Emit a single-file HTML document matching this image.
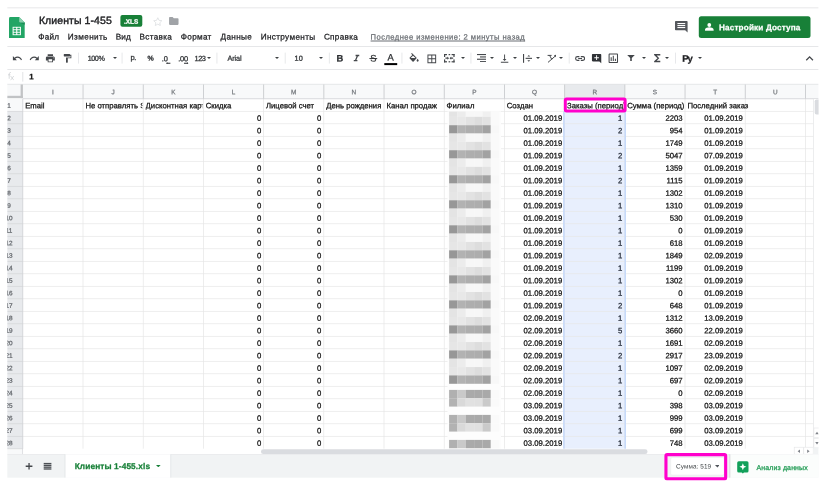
<!DOCTYPE html>
<html lang="ru"><head><meta charset="utf-8"><title>Клиенты 1-455</title>
<style>
html,body{margin:0;padding:0;background:#fff}
#r{filter:blur(0.4px);position:relative;width:829px;height:493px;overflow:hidden;background:#fff;font-family:"Liberation Sans",sans-serif}
#r div,#r span,#r svg{position:absolute;display:block}
#r span{-webkit-text-stroke:0.25px;left:0;top:0;white-space:nowrap;transform-origin:0 0;text-rendering:geometricPrecision}
#t{left:0;top:0;width:829px;height:493px;will-change:transform}
</style></head>
<body><div id="r">
<svg style="left:0;top:0" width="829" height="493" viewBox="0 0 829 493">
<rect x="7.20" y="7.40" width="811.40" height="0.90" fill="#e4e5e7"/>
<rect x="7.20" y="46.00" width="811.40" height="0.90" fill="#e4e5e7"/>
<rect x="7.20" y="69.10" width="811.40" height="0.90" fill="#e4e5e7"/>
<rect x="120.40" y="15.10" width="21.90" height="11.70" fill="#188038" rx="2"/>
<rect x="698.80" y="16.30" width="111.70" height="21.80" fill="#188038" rx="2.5"/>
<rect x="78.10" y="52.60" width="0.70" height="11.00" fill="#dddfe2"/>
<rect x="121.70" y="52.60" width="0.70" height="11.00" fill="#dddfe2"/>
<rect x="216.60" y="52.60" width="0.70" height="11.00" fill="#dddfe2"/>
<rect x="284.80" y="52.60" width="0.70" height="11.00" fill="#dddfe2"/>
<rect x="328.90" y="52.60" width="0.70" height="11.00" fill="#dddfe2"/>
<rect x="369.40" y="58.00" width="7.80" height="0.90" fill="#2b2e31"/>
<rect x="384.30" y="63.10" width="12.90" height="2.00" fill="#000"/>
<rect x="401.60" y="52.60" width="0.70" height="11.00" fill="#dddfe2"/>
<rect x="470.60" y="52.60" width="0.70" height="11.00" fill="#dddfe2"/>
<rect x="568.80" y="52.60" width="0.70" height="11.00" fill="#dddfe2"/>
<rect x="675.00" y="52.60" width="0.70" height="11.00" fill="#dddfe2"/>
<rect x="22.50" y="72.00" width="0.70" height="9.60" fill="#d5d7da"/>
<rect x="7.20" y="84.20" width="811.40" height="14.60" fill="#f8f9fa"/>
<rect x="7.20" y="98.80" width="15.60" height="355.50" fill="#f8f9fa"/>
<rect x="564.60" y="84.20" width="60.20" height="14.60" fill="#e8eaed"/>
<rect x="7.20" y="111.30" width="15.60" height="337.50" fill="#e8eaed"/>
<rect x="563.40" y="111.30" width="62.40" height="337.50" fill="#e8effd"/>
<rect x="22.80" y="110.95" width="790.70" height="0.70" fill="#e6e6e6"/>
<rect x="7.20" y="110.95" width="15.60" height="0.70" fill="#d3d5d8"/>
<rect x="22.80" y="123.45" width="790.70" height="0.70" fill="#e6e6e6"/>
<rect x="7.20" y="123.45" width="15.60" height="0.70" fill="#d3d5d8"/>
<rect x="22.80" y="135.95" width="790.70" height="0.70" fill="#e6e6e6"/>
<rect x="7.20" y="135.95" width="15.60" height="0.70" fill="#d3d5d8"/>
<rect x="22.80" y="148.45" width="790.70" height="0.70" fill="#e6e6e6"/>
<rect x="7.20" y="148.45" width="15.60" height="0.70" fill="#d3d5d8"/>
<rect x="22.80" y="160.95" width="790.70" height="0.70" fill="#e6e6e6"/>
<rect x="7.20" y="160.95" width="15.60" height="0.70" fill="#d3d5d8"/>
<rect x="22.80" y="173.45" width="790.70" height="0.70" fill="#e6e6e6"/>
<rect x="7.20" y="173.45" width="15.60" height="0.70" fill="#d3d5d8"/>
<rect x="22.80" y="185.95" width="790.70" height="0.70" fill="#e6e6e6"/>
<rect x="7.20" y="185.95" width="15.60" height="0.70" fill="#d3d5d8"/>
<rect x="22.80" y="198.45" width="790.70" height="0.70" fill="#e6e6e6"/>
<rect x="7.20" y="198.45" width="15.60" height="0.70" fill="#d3d5d8"/>
<rect x="22.80" y="210.95" width="790.70" height="0.70" fill="#e6e6e6"/>
<rect x="7.20" y="210.95" width="15.60" height="0.70" fill="#d3d5d8"/>
<rect x="22.80" y="223.45" width="790.70" height="0.70" fill="#e6e6e6"/>
<rect x="7.20" y="223.45" width="15.60" height="0.70" fill="#d3d5d8"/>
<rect x="22.80" y="235.95" width="790.70" height="0.70" fill="#e6e6e6"/>
<rect x="7.20" y="235.95" width="15.60" height="0.70" fill="#d3d5d8"/>
<rect x="22.80" y="248.45" width="790.70" height="0.70" fill="#e6e6e6"/>
<rect x="7.20" y="248.45" width="15.60" height="0.70" fill="#d3d5d8"/>
<rect x="22.80" y="260.95" width="790.70" height="0.70" fill="#e6e6e6"/>
<rect x="7.20" y="260.95" width="15.60" height="0.70" fill="#d3d5d8"/>
<rect x="22.80" y="273.45" width="790.70" height="0.70" fill="#e6e6e6"/>
<rect x="7.20" y="273.45" width="15.60" height="0.70" fill="#d3d5d8"/>
<rect x="22.80" y="285.95" width="790.70" height="0.70" fill="#e6e6e6"/>
<rect x="7.20" y="285.95" width="15.60" height="0.70" fill="#d3d5d8"/>
<rect x="22.80" y="298.45" width="790.70" height="0.70" fill="#e6e6e6"/>
<rect x="7.20" y="298.45" width="15.60" height="0.70" fill="#d3d5d8"/>
<rect x="22.80" y="310.95" width="790.70" height="0.70" fill="#e6e6e6"/>
<rect x="7.20" y="310.95" width="15.60" height="0.70" fill="#d3d5d8"/>
<rect x="22.80" y="323.45" width="790.70" height="0.70" fill="#e6e6e6"/>
<rect x="7.20" y="323.45" width="15.60" height="0.70" fill="#d3d5d8"/>
<rect x="22.80" y="335.95" width="790.70" height="0.70" fill="#e6e6e6"/>
<rect x="7.20" y="335.95" width="15.60" height="0.70" fill="#d3d5d8"/>
<rect x="22.80" y="348.45" width="790.70" height="0.70" fill="#e6e6e6"/>
<rect x="7.20" y="348.45" width="15.60" height="0.70" fill="#d3d5d8"/>
<rect x="22.80" y="360.95" width="790.70" height="0.70" fill="#e6e6e6"/>
<rect x="7.20" y="360.95" width="15.60" height="0.70" fill="#d3d5d8"/>
<rect x="22.80" y="373.45" width="790.70" height="0.70" fill="#e6e6e6"/>
<rect x="7.20" y="373.45" width="15.60" height="0.70" fill="#d3d5d8"/>
<rect x="22.80" y="385.95" width="790.70" height="0.70" fill="#e6e6e6"/>
<rect x="7.20" y="385.95" width="15.60" height="0.70" fill="#d3d5d8"/>
<rect x="22.80" y="398.45" width="790.70" height="0.70" fill="#e6e6e6"/>
<rect x="7.20" y="398.45" width="15.60" height="0.70" fill="#d3d5d8"/>
<rect x="22.80" y="410.95" width="790.70" height="0.70" fill="#e6e6e6"/>
<rect x="7.20" y="410.95" width="15.60" height="0.70" fill="#d3d5d8"/>
<rect x="22.80" y="423.45" width="790.70" height="0.70" fill="#e6e6e6"/>
<rect x="7.20" y="423.45" width="15.60" height="0.70" fill="#d3d5d8"/>
<rect x="22.80" y="435.95" width="790.70" height="0.70" fill="#e6e6e6"/>
<rect x="7.20" y="435.95" width="15.60" height="0.70" fill="#d3d5d8"/>
<rect x="7.20" y="448.45" width="15.60" height="0.70" fill="#d3d5d8"/>
<rect x="82.65" y="98.80" width="0.70" height="350.00" fill="#e6e6e6"/>
<rect x="82.60" y="84.20" width="0.90" height="14.60" fill="#c9cbce"/>
<rect x="142.85" y="98.80" width="0.70" height="350.00" fill="#e6e6e6"/>
<rect x="142.80" y="84.20" width="0.90" height="14.60" fill="#c9cbce"/>
<rect x="203.05" y="98.80" width="0.70" height="350.00" fill="#e6e6e6"/>
<rect x="203.00" y="84.20" width="0.90" height="14.60" fill="#c9cbce"/>
<rect x="263.25" y="98.80" width="0.70" height="350.00" fill="#e6e6e6"/>
<rect x="263.20" y="84.20" width="0.90" height="14.60" fill="#c9cbce"/>
<rect x="323.45" y="98.80" width="0.70" height="350.00" fill="#e6e6e6"/>
<rect x="323.40" y="84.20" width="0.90" height="14.60" fill="#c9cbce"/>
<rect x="383.65" y="98.80" width="0.70" height="350.00" fill="#e6e6e6"/>
<rect x="383.60" y="84.20" width="0.90" height="14.60" fill="#c9cbce"/>
<rect x="443.85" y="98.80" width="0.70" height="350.00" fill="#e6e6e6"/>
<rect x="443.80" y="84.20" width="0.90" height="14.60" fill="#c9cbce"/>
<rect x="504.05" y="98.80" width="0.70" height="350.00" fill="#e6e6e6"/>
<rect x="504.00" y="84.20" width="0.90" height="14.60" fill="#c9cbce"/>
<rect x="564.25" y="98.80" width="0.70" height="350.00" fill="#e6e6e6"/>
<rect x="564.20" y="84.20" width="0.90" height="14.60" fill="#c9cbce"/>
<rect x="624.45" y="98.80" width="0.70" height="350.00" fill="#e6e6e6"/>
<rect x="624.40" y="84.20" width="0.90" height="14.60" fill="#c9cbce"/>
<rect x="684.65" y="98.80" width="0.70" height="350.00" fill="#e6e6e6"/>
<rect x="684.60" y="84.20" width="0.90" height="14.60" fill="#c9cbce"/>
<rect x="744.85" y="98.80" width="0.70" height="350.00" fill="#e6e6e6"/>
<rect x="744.80" y="84.20" width="0.90" height="14.60" fill="#c9cbce"/>
<rect x="805.05" y="98.80" width="0.70" height="350.00" fill="#e6e6e6"/>
<rect x="805.00" y="84.20" width="0.90" height="14.60" fill="#c9cbce"/>
<rect x="865.25" y="98.80" width="0.70" height="350.00" fill="#e6e6e6"/>
<rect x="865.20" y="84.20" width="0.90" height="14.60" fill="#c9cbce"/>
<rect x="563.20" y="111.30" width="1.40" height="337.50" fill="#c3d7fa"/>
<rect x="624.50" y="111.30" width="1.40" height="337.50" fill="#c3d7fa"/>
<rect x="7.20" y="83.85" width="811.40" height="0.70" fill="#dcdee0"/>
<rect x="22.80" y="98.40" width="795.80" height="0.80" fill="#cfd1d4"/>
<rect x="22.40" y="98.80" width="0.80" height="355.50" fill="#cfd1d4"/>
<rect x="20.60" y="84.50" width="2.30" height="13.60" fill="#c1c3c5"/>
<rect x="7.20" y="95.80" width="15.70" height="2.30" fill="#c1c3c5"/>
<rect x="813.50" y="99.20" width="5.10" height="355.50" fill="#fff"/>
<rect x="813.20" y="98.80" width="0.60" height="350.00" fill="#e0e1e3"/>
<rect x="814.70" y="99.50" width="6.00" height="15.10" fill="#dadce0" rx="1.8"/>
<rect x="447.50" y="111.30" width="53.50" height="337.50" fill="#fdfdfd"/>
<rect x="449.10" y="111.60" width="8.39" height="5.31" fill="#e4e4e4"/>
<rect x="457.44" y="111.60" width="8.39" height="5.31" fill="#ececec"/>
<rect x="465.78" y="111.60" width="8.39" height="5.31" fill="#f7f7f7"/>
<rect x="474.12" y="111.60" width="8.39" height="5.31" fill="#f7f7f7"/>
<rect x="482.46" y="111.60" width="8.39" height="5.31" fill="#f0f0f0"/>
<rect x="490.80" y="111.60" width="8.39" height="5.31" fill="#fafafa"/>
<rect x="449.10" y="116.86" width="8.39" height="8.39" fill="#e6e6e6"/>
<rect x="457.44" y="116.86" width="8.39" height="8.39" fill="#e8e8e8"/>
<rect x="465.78" y="116.86" width="8.39" height="8.39" fill="#e2e2e2"/>
<rect x="474.12" y="116.86" width="8.39" height="8.39" fill="#dddddd"/>
<rect x="482.46" y="116.86" width="8.39" height="8.39" fill="#e2e2e2"/>
<rect x="490.80" y="116.86" width="8.39" height="8.39" fill="#fafafa"/>
<rect x="449.10" y="125.20" width="8.39" height="8.39" fill="#979797"/>
<rect x="457.44" y="125.20" width="8.39" height="8.39" fill="#b2b2b2"/>
<rect x="465.78" y="125.20" width="8.39" height="8.39" fill="#aeaeae"/>
<rect x="474.12" y="125.20" width="8.39" height="8.39" fill="#adadad"/>
<rect x="482.46" y="125.20" width="8.39" height="8.39" fill="#a2a2a2"/>
<rect x="490.80" y="125.20" width="8.39" height="8.39" fill="#f8f8f8"/>
<rect x="449.10" y="133.54" width="8.39" height="8.39" fill="#e4e4e4"/>
<rect x="457.44" y="133.54" width="8.39" height="8.39" fill="#ececec"/>
<rect x="465.78" y="133.54" width="8.39" height="8.39" fill="#f7f7f7"/>
<rect x="474.12" y="133.54" width="8.39" height="8.39" fill="#f7f7f7"/>
<rect x="482.46" y="133.54" width="8.39" height="8.39" fill="#f0f0f0"/>
<rect x="490.80" y="133.54" width="8.39" height="8.39" fill="#fafafa"/>
<rect x="449.10" y="141.88" width="8.39" height="8.39" fill="#e6e6e6"/>
<rect x="457.44" y="141.88" width="8.39" height="8.39" fill="#e8e8e8"/>
<rect x="465.78" y="141.88" width="8.39" height="8.39" fill="#e2e2e2"/>
<rect x="474.12" y="141.88" width="8.39" height="8.39" fill="#dddddd"/>
<rect x="482.46" y="141.88" width="8.39" height="8.39" fill="#e2e2e2"/>
<rect x="490.80" y="141.88" width="8.39" height="8.39" fill="#fafafa"/>
<rect x="449.10" y="150.22" width="8.39" height="8.39" fill="#979797"/>
<rect x="457.44" y="150.22" width="8.39" height="8.39" fill="#b2b2b2"/>
<rect x="465.78" y="150.22" width="8.39" height="8.39" fill="#aeaeae"/>
<rect x="474.12" y="150.22" width="8.39" height="8.39" fill="#adadad"/>
<rect x="482.46" y="150.22" width="8.39" height="8.39" fill="#a2a2a2"/>
<rect x="490.80" y="150.22" width="8.39" height="8.39" fill="#f8f8f8"/>
<rect x="449.10" y="158.56" width="8.39" height="8.39" fill="#e4e4e4"/>
<rect x="457.44" y="158.56" width="8.39" height="8.39" fill="#ececec"/>
<rect x="465.78" y="158.56" width="8.39" height="8.39" fill="#f7f7f7"/>
<rect x="474.12" y="158.56" width="8.39" height="8.39" fill="#f7f7f7"/>
<rect x="482.46" y="158.56" width="8.39" height="8.39" fill="#f0f0f0"/>
<rect x="490.80" y="158.56" width="8.39" height="8.39" fill="#fafafa"/>
<rect x="449.10" y="166.90" width="8.39" height="8.39" fill="#e6e6e6"/>
<rect x="457.44" y="166.90" width="8.39" height="8.39" fill="#e8e8e8"/>
<rect x="465.78" y="166.90" width="8.39" height="8.39" fill="#e2e2e2"/>
<rect x="474.12" y="166.90" width="8.39" height="8.39" fill="#dddddd"/>
<rect x="482.46" y="166.90" width="8.39" height="8.39" fill="#e2e2e2"/>
<rect x="490.80" y="166.90" width="8.39" height="8.39" fill="#fafafa"/>
<rect x="449.10" y="175.24" width="8.39" height="8.39" fill="#979797"/>
<rect x="457.44" y="175.24" width="8.39" height="8.39" fill="#b2b2b2"/>
<rect x="465.78" y="175.24" width="8.39" height="8.39" fill="#aeaeae"/>
<rect x="474.12" y="175.24" width="8.39" height="8.39" fill="#adadad"/>
<rect x="482.46" y="175.24" width="8.39" height="8.39" fill="#a2a2a2"/>
<rect x="490.80" y="175.24" width="8.39" height="8.39" fill="#f8f8f8"/>
<rect x="449.10" y="183.58" width="8.39" height="8.39" fill="#e4e4e4"/>
<rect x="457.44" y="183.58" width="8.39" height="8.39" fill="#ececec"/>
<rect x="465.78" y="183.58" width="8.39" height="8.39" fill="#f7f7f7"/>
<rect x="474.12" y="183.58" width="8.39" height="8.39" fill="#f7f7f7"/>
<rect x="482.46" y="183.58" width="8.39" height="8.39" fill="#f0f0f0"/>
<rect x="490.80" y="183.58" width="8.39" height="8.39" fill="#fafafa"/>
<rect x="449.10" y="191.92" width="8.39" height="8.39" fill="#e6e6e6"/>
<rect x="457.44" y="191.92" width="8.39" height="8.39" fill="#e8e8e8"/>
<rect x="465.78" y="191.92" width="8.39" height="8.39" fill="#e2e2e2"/>
<rect x="474.12" y="191.92" width="8.39" height="8.39" fill="#dddddd"/>
<rect x="482.46" y="191.92" width="8.39" height="8.39" fill="#e2e2e2"/>
<rect x="490.80" y="191.92" width="8.39" height="8.39" fill="#fafafa"/>
<rect x="449.10" y="200.26" width="8.39" height="8.39" fill="#979797"/>
<rect x="457.44" y="200.26" width="8.39" height="8.39" fill="#b2b2b2"/>
<rect x="465.78" y="200.26" width="8.39" height="8.39" fill="#aeaeae"/>
<rect x="474.12" y="200.26" width="8.39" height="8.39" fill="#adadad"/>
<rect x="482.46" y="200.26" width="8.39" height="8.39" fill="#a2a2a2"/>
<rect x="490.80" y="200.26" width="8.39" height="8.39" fill="#f8f8f8"/>
<rect x="449.10" y="208.60" width="8.39" height="8.39" fill="#e4e4e4"/>
<rect x="457.44" y="208.60" width="8.39" height="8.39" fill="#ececec"/>
<rect x="465.78" y="208.60" width="8.39" height="8.39" fill="#f7f7f7"/>
<rect x="474.12" y="208.60" width="8.39" height="8.39" fill="#f7f7f7"/>
<rect x="482.46" y="208.60" width="8.39" height="8.39" fill="#f0f0f0"/>
<rect x="490.80" y="208.60" width="8.39" height="8.39" fill="#fafafa"/>
<rect x="449.10" y="216.94" width="8.39" height="8.39" fill="#e6e6e6"/>
<rect x="457.44" y="216.94" width="8.39" height="8.39" fill="#e8e8e8"/>
<rect x="465.78" y="216.94" width="8.39" height="8.39" fill="#e2e2e2"/>
<rect x="474.12" y="216.94" width="8.39" height="8.39" fill="#dddddd"/>
<rect x="482.46" y="216.94" width="8.39" height="8.39" fill="#e2e2e2"/>
<rect x="490.80" y="216.94" width="8.39" height="8.39" fill="#fafafa"/>
<rect x="449.10" y="225.28" width="8.39" height="8.39" fill="#979797"/>
<rect x="457.44" y="225.28" width="8.39" height="8.39" fill="#b2b2b2"/>
<rect x="465.78" y="225.28" width="8.39" height="8.39" fill="#aeaeae"/>
<rect x="474.12" y="225.28" width="8.39" height="8.39" fill="#adadad"/>
<rect x="482.46" y="225.28" width="8.39" height="8.39" fill="#a2a2a2"/>
<rect x="490.80" y="225.28" width="8.39" height="8.39" fill="#f8f8f8"/>
<rect x="449.10" y="233.62" width="8.39" height="8.39" fill="#e4e4e4"/>
<rect x="457.44" y="233.62" width="8.39" height="8.39" fill="#ececec"/>
<rect x="465.78" y="233.62" width="8.39" height="8.39" fill="#f7f7f7"/>
<rect x="474.12" y="233.62" width="8.39" height="8.39" fill="#f7f7f7"/>
<rect x="482.46" y="233.62" width="8.39" height="8.39" fill="#f0f0f0"/>
<rect x="490.80" y="233.62" width="8.39" height="8.39" fill="#fafafa"/>
<rect x="449.10" y="241.96" width="8.39" height="8.39" fill="#e6e6e6"/>
<rect x="457.44" y="241.96" width="8.39" height="8.39" fill="#e8e8e8"/>
<rect x="465.78" y="241.96" width="8.39" height="8.39" fill="#e2e2e2"/>
<rect x="474.12" y="241.96" width="8.39" height="8.39" fill="#dddddd"/>
<rect x="482.46" y="241.96" width="8.39" height="8.39" fill="#e2e2e2"/>
<rect x="490.80" y="241.96" width="8.39" height="8.39" fill="#fafafa"/>
<rect x="449.10" y="250.30" width="8.39" height="8.39" fill="#979797"/>
<rect x="457.44" y="250.30" width="8.39" height="8.39" fill="#b2b2b2"/>
<rect x="465.78" y="250.30" width="8.39" height="8.39" fill="#aeaeae"/>
<rect x="474.12" y="250.30" width="8.39" height="8.39" fill="#adadad"/>
<rect x="482.46" y="250.30" width="8.39" height="8.39" fill="#a2a2a2"/>
<rect x="490.80" y="250.30" width="8.39" height="8.39" fill="#f8f8f8"/>
<rect x="449.10" y="258.64" width="8.39" height="8.39" fill="#e4e4e4"/>
<rect x="457.44" y="258.64" width="8.39" height="8.39" fill="#ececec"/>
<rect x="465.78" y="258.64" width="8.39" height="8.39" fill="#f7f7f7"/>
<rect x="474.12" y="258.64" width="8.39" height="8.39" fill="#f7f7f7"/>
<rect x="482.46" y="258.64" width="8.39" height="8.39" fill="#f0f0f0"/>
<rect x="490.80" y="258.64" width="8.39" height="8.39" fill="#fafafa"/>
<rect x="449.10" y="266.98" width="8.39" height="8.39" fill="#e6e6e6"/>
<rect x="457.44" y="266.98" width="8.39" height="8.39" fill="#e8e8e8"/>
<rect x="465.78" y="266.98" width="8.39" height="8.39" fill="#e2e2e2"/>
<rect x="474.12" y="266.98" width="8.39" height="8.39" fill="#dddddd"/>
<rect x="482.46" y="266.98" width="8.39" height="8.39" fill="#e2e2e2"/>
<rect x="490.80" y="266.98" width="8.39" height="8.39" fill="#fafafa"/>
<rect x="449.10" y="275.32" width="8.39" height="8.39" fill="#979797"/>
<rect x="457.44" y="275.32" width="8.39" height="8.39" fill="#b2b2b2"/>
<rect x="465.78" y="275.32" width="8.39" height="8.39" fill="#aeaeae"/>
<rect x="474.12" y="275.32" width="8.39" height="8.39" fill="#adadad"/>
<rect x="482.46" y="275.32" width="8.39" height="8.39" fill="#a2a2a2"/>
<rect x="490.80" y="275.32" width="8.39" height="8.39" fill="#f8f8f8"/>
<rect x="449.10" y="283.66" width="8.39" height="8.39" fill="#e4e4e4"/>
<rect x="457.44" y="283.66" width="8.39" height="8.39" fill="#ececec"/>
<rect x="465.78" y="283.66" width="8.39" height="8.39" fill="#f7f7f7"/>
<rect x="474.12" y="283.66" width="8.39" height="8.39" fill="#f7f7f7"/>
<rect x="482.46" y="283.66" width="8.39" height="8.39" fill="#f0f0f0"/>
<rect x="490.80" y="283.66" width="8.39" height="8.39" fill="#fafafa"/>
<rect x="449.10" y="292.00" width="8.39" height="8.39" fill="#e6e6e6"/>
<rect x="457.44" y="292.00" width="8.39" height="8.39" fill="#e8e8e8"/>
<rect x="465.78" y="292.00" width="8.39" height="8.39" fill="#e2e2e2"/>
<rect x="474.12" y="292.00" width="8.39" height="8.39" fill="#dddddd"/>
<rect x="482.46" y="292.00" width="8.39" height="8.39" fill="#e2e2e2"/>
<rect x="490.80" y="292.00" width="8.39" height="8.39" fill="#fafafa"/>
<rect x="449.10" y="300.34" width="8.39" height="8.39" fill="#979797"/>
<rect x="457.44" y="300.34" width="8.39" height="8.39" fill="#b2b2b2"/>
<rect x="465.78" y="300.34" width="8.39" height="8.39" fill="#aeaeae"/>
<rect x="474.12" y="300.34" width="8.39" height="8.39" fill="#adadad"/>
<rect x="482.46" y="300.34" width="8.39" height="8.39" fill="#a2a2a2"/>
<rect x="490.80" y="300.34" width="8.39" height="8.39" fill="#f8f8f8"/>
<rect x="449.10" y="308.68" width="8.39" height="8.39" fill="#e4e4e4"/>
<rect x="457.44" y="308.68" width="8.39" height="8.39" fill="#ececec"/>
<rect x="465.78" y="308.68" width="8.39" height="8.39" fill="#f7f7f7"/>
<rect x="474.12" y="308.68" width="8.39" height="8.39" fill="#f7f7f7"/>
<rect x="482.46" y="308.68" width="8.39" height="8.39" fill="#f0f0f0"/>
<rect x="490.80" y="308.68" width="8.39" height="8.39" fill="#fafafa"/>
<rect x="449.10" y="317.02" width="8.39" height="8.39" fill="#e6e6e6"/>
<rect x="457.44" y="317.02" width="8.39" height="8.39" fill="#e8e8e8"/>
<rect x="465.78" y="317.02" width="8.39" height="8.39" fill="#e2e2e2"/>
<rect x="474.12" y="317.02" width="8.39" height="8.39" fill="#dddddd"/>
<rect x="482.46" y="317.02" width="8.39" height="8.39" fill="#e2e2e2"/>
<rect x="490.80" y="317.02" width="8.39" height="8.39" fill="#fafafa"/>
<rect x="449.10" y="325.36" width="8.39" height="8.39" fill="#979797"/>
<rect x="457.44" y="325.36" width="8.39" height="8.39" fill="#b2b2b2"/>
<rect x="465.78" y="325.36" width="8.39" height="8.39" fill="#aeaeae"/>
<rect x="474.12" y="325.36" width="8.39" height="8.39" fill="#adadad"/>
<rect x="482.46" y="325.36" width="8.39" height="8.39" fill="#a2a2a2"/>
<rect x="490.80" y="325.36" width="8.39" height="8.39" fill="#f8f8f8"/>
<rect x="449.10" y="333.70" width="8.39" height="8.39" fill="#e4e4e4"/>
<rect x="457.44" y="333.70" width="8.39" height="8.39" fill="#ececec"/>
<rect x="465.78" y="333.70" width="8.39" height="8.39" fill="#f7f7f7"/>
<rect x="474.12" y="333.70" width="8.39" height="8.39" fill="#f7f7f7"/>
<rect x="482.46" y="333.70" width="8.39" height="8.39" fill="#f0f0f0"/>
<rect x="490.80" y="333.70" width="8.39" height="8.39" fill="#fafafa"/>
<rect x="449.10" y="342.04" width="8.39" height="8.39" fill="#e6e6e6"/>
<rect x="457.44" y="342.04" width="8.39" height="8.39" fill="#e8e8e8"/>
<rect x="465.78" y="342.04" width="8.39" height="8.39" fill="#e2e2e2"/>
<rect x="474.12" y="342.04" width="8.39" height="8.39" fill="#dddddd"/>
<rect x="482.46" y="342.04" width="8.39" height="8.39" fill="#e2e2e2"/>
<rect x="490.80" y="342.04" width="8.39" height="8.39" fill="#fafafa"/>
<rect x="449.10" y="350.38" width="8.39" height="8.39" fill="#979797"/>
<rect x="457.44" y="350.38" width="8.39" height="8.39" fill="#b2b2b2"/>
<rect x="465.78" y="350.38" width="8.39" height="8.39" fill="#aeaeae"/>
<rect x="474.12" y="350.38" width="8.39" height="8.39" fill="#adadad"/>
<rect x="482.46" y="350.38" width="8.39" height="8.39" fill="#a2a2a2"/>
<rect x="490.80" y="350.38" width="8.39" height="8.39" fill="#f8f8f8"/>
<rect x="449.10" y="358.72" width="8.39" height="8.39" fill="#e4e4e4"/>
<rect x="457.44" y="358.72" width="8.39" height="8.39" fill="#ececec"/>
<rect x="465.78" y="358.72" width="8.39" height="8.39" fill="#f7f7f7"/>
<rect x="474.12" y="358.72" width="8.39" height="8.39" fill="#f7f7f7"/>
<rect x="482.46" y="358.72" width="8.39" height="8.39" fill="#f0f0f0"/>
<rect x="490.80" y="358.72" width="8.39" height="8.39" fill="#fafafa"/>
<rect x="449.10" y="367.06" width="8.39" height="8.39" fill="#e6e6e6"/>
<rect x="457.44" y="367.06" width="8.39" height="8.39" fill="#e8e8e8"/>
<rect x="465.78" y="367.06" width="8.39" height="8.39" fill="#e2e2e2"/>
<rect x="474.12" y="367.06" width="8.39" height="8.39" fill="#dddddd"/>
<rect x="482.46" y="367.06" width="8.39" height="8.39" fill="#e2e2e2"/>
<rect x="490.80" y="367.06" width="8.39" height="8.39" fill="#fafafa"/>
<rect x="449.10" y="375.40" width="8.39" height="8.39" fill="#979797"/>
<rect x="457.44" y="375.40" width="8.39" height="8.39" fill="#b2b2b2"/>
<rect x="465.78" y="375.40" width="8.39" height="8.39" fill="#aeaeae"/>
<rect x="474.12" y="375.40" width="8.39" height="8.39" fill="#adadad"/>
<rect x="482.46" y="375.40" width="8.39" height="8.39" fill="#a2a2a2"/>
<rect x="490.80" y="375.40" width="8.39" height="8.39" fill="#f8f8f8"/>
<rect x="449.10" y="389.90" width="8.39" height="8.39" fill="#b0b0b0"/>
<rect x="457.44" y="389.90" width="8.39" height="8.39" fill="#c9c9c9"/>
<rect x="465.78" y="389.90" width="8.39" height="8.39" fill="#aaaaaa"/>
<rect x="474.12" y="389.90" width="8.39" height="8.39" fill="#a9a9a9"/>
<rect x="482.46" y="389.90" width="8.39" height="8.39" fill="#a9a9a9"/>
<rect x="490.80" y="389.90" width="8.39" height="8.39" fill="#fafafa"/>
<rect x="449.10" y="398.24" width="8.39" height="8.34" fill="#b2b2b2"/>
<rect x="457.44" y="398.24" width="8.39" height="8.34" fill="#d9d9d9"/>
<rect x="465.78" y="398.24" width="8.39" height="8.34" fill="#e1e1e1"/>
<rect x="474.12" y="398.24" width="8.39" height="8.34" fill="#e0e0e0"/>
<rect x="482.46" y="398.24" width="8.39" height="8.34" fill="#cacaca"/>
<rect x="490.80" y="398.24" width="8.39" height="8.34" fill="#fafafa"/>
<rect x="449.10" y="414.90" width="8.39" height="8.39" fill="#b0b0b0"/>
<rect x="457.44" y="414.90" width="8.39" height="8.39" fill="#c9c9c9"/>
<rect x="465.78" y="414.90" width="8.39" height="8.39" fill="#aaaaaa"/>
<rect x="474.12" y="414.90" width="8.39" height="8.39" fill="#a9a9a9"/>
<rect x="482.46" y="414.90" width="8.39" height="8.39" fill="#a9a9a9"/>
<rect x="490.80" y="414.90" width="8.39" height="8.39" fill="#fafafa"/>
<rect x="449.10" y="423.24" width="8.39" height="8.34" fill="#b2b2b2"/>
<rect x="457.44" y="423.24" width="8.39" height="8.34" fill="#d9d9d9"/>
<rect x="465.78" y="423.24" width="8.39" height="8.34" fill="#e1e1e1"/>
<rect x="474.12" y="423.24" width="8.39" height="8.34" fill="#e0e0e0"/>
<rect x="482.46" y="423.24" width="8.39" height="8.34" fill="#cacaca"/>
<rect x="490.80" y="423.24" width="8.39" height="8.34" fill="#fafafa"/>
<rect x="449.10" y="439.90" width="8.39" height="8.39" fill="#b0b0b0"/>
<rect x="457.44" y="439.90" width="8.39" height="8.39" fill="#c9c9c9"/>
<rect x="465.78" y="439.90" width="8.39" height="8.39" fill="#aaaaaa"/>
<rect x="474.12" y="439.90" width="8.39" height="8.39" fill="#a9a9a9"/>
<rect x="482.46" y="439.90" width="8.39" height="8.39" fill="#a9a9a9"/>
<rect x="490.80" y="439.90" width="8.39" height="8.39" fill="#fafafa"/>
<rect x="23.20" y="448.80" width="795.80" height="5.50" fill="#fff"/>
<rect x="261.00" y="449.30" width="386.50" height="4.70" fill="#dadce0" rx="2.3"/>
<rect x="813.90" y="428.00" width="6.00" height="9.60" fill="#fff" stroke="#e3e4e6" stroke-width="0.6"/>
<rect x="813.90" y="438.40" width="6.00" height="9.60" fill="#fff" stroke="#e3e4e6" stroke-width="0.6"/>
<path d="M815.2 434.2h3.6l-1.8-2.4z" fill="#80848a"/><path d="M815.2 442.0h3.6l-1.8 2.4z" fill="#80848a"/>
<rect x="794.20" y="447.20" width="9.40" height="7.00" fill="#fff" stroke="#e3e4e6" stroke-width="0.6"/>
<rect x="803.80" y="447.20" width="9.40" height="7.00" fill="#fff" stroke="#e3e4e6" stroke-width="0.6"/>
<path d="M800.0 449.5v3.6l-2.4-1.8z" fill="#80848a"/><path d="M807.2 449.5v3.6l2.4-1.8z" fill="#80848a"/>
<rect x="813.40" y="447.20" width="5.20" height="7.00" fill="#f1f3f4"/>
<rect x="7.20" y="454.30" width="811.40" height="23.50" fill="#f1f3f4"/>
<rect x="7.20" y="454.00" width="811.40" height="0.60" fill="#e4e6e8"/>
<rect x="65.20" y="454.30" width="105.40" height="23.50" fill="#fff"/>
<rect x="64.60" y="454.30" width="0.80" height="23.50" fill="#e2e4e6"/>
<rect x="170.40" y="454.30" width="0.80" height="23.50" fill="#e2e4e6"/>
<path d="M28.4 462.9h1.3v2.7h2.7v1.3h-2.7v2.7h-1.3v-2.7h-2.7v-1.3h2.7z" fill="#44474b"/>
<rect x="43.70" y="462.90" width="7.70" height="1.35" fill="#4c4f54"/>
<rect x="43.70" y="464.70" width="7.70" height="1.35" fill="#4c4f54"/>
<rect x="43.70" y="466.50" width="7.70" height="1.35" fill="#4c4f54"/>
<rect x="43.70" y="468.30" width="7.70" height="1.35" fill="#4c4f54"/>
<rect x="730.20" y="454.30" width="88.40" height="23.50" fill="#fbfdfc"/>
<rect x="729.40" y="454.30" width="0.90" height="23.50" fill="#d6d8db"/>
<rect x="670.70" y="457.50" width="53.30" height="17.50" fill="#fff" rx="1.5" stroke="#e8eaed" stroke-width="0.5"/>
<path d="M738.7 461.2h8.3a1.5 1.5 0 0 1 1.5 1.5v8.2a1.5 1.5 0 0 1-1.5 1.5h-3.0l-1.15 1.1-1.15-1.1h-3.0a1.5 1.5 0 0 1-1.5-1.5v-8.2a1.5 1.5 0 0 1 1.5-1.5z" fill="#12a05a"/><path d="M742.85 463.3l1.0 2.5 2.5 1.0-2.5 1.0-1.0 2.5-1.0-2.5-2.5-1.0 2.5-1.0z" fill="#fff"/>
</svg>
<div id="t">
<svg style="left:9.40px;top:16.50px" width="15.70" height="21.80" viewBox="0 0 157 218"><path d="M14 0 H102 L157 55 V204 a14 14 0 0 1 -14 14 H14 a14 14 0 0 1 -14 -14 V14 a14 14 0 0 1 14 -14z" fill="#22a565"/>
<path d="M102 55 H157 V78z" fill="#1b8a54"/>
<path d="M102 0 L157 55 H114 a12 12 0 0 1 -12 -12z" fill="#8bd0af"/>
<rect x="36" y="98" width="83" height="84" fill="#fff"/>
<rect x="46" y="107" width="26" height="16" fill="#22a565"/><rect x="83" y="107" width="26" height="16" fill="#22a565"/>
<rect x="46" y="132" width="26" height="16" fill="#22a565"/><rect x="83" y="132" width="26" height="16" fill="#22a565"/>
<rect x="46" y="157" width="26" height="16" fill="#22a565"/><rect x="83" y="157" width="26" height="16" fill="#22a565"/></svg>
<span style="font-size:10.5px;line-height:14.7px;color:#202124;letter-spacing:0.085px;transform:translate(38.90px,14.05px) rotate(0.05deg);-webkit-text-stroke:0.4px #202124;">Клиенты 1-455</span>
<span style="font-size:6.4px;line-height:8.96px;color:#fff;font-weight:700;transform:translate(124.09px,18.71px) rotate(0.05deg);">.XLS</span>
<svg style="left:152.80px;top:16.90px" width="9.60" height="9.20" viewBox="0 0 24 23"><path d="M12 1.8l3.1 6.6 7.1.9-5.2 5 1.3 7.1L12 17.9 5.7 21.4 7 14.3l-5.2-5 7.1-.9z" fill="none" stroke="#dcdee1" stroke-width="2"/></svg>
<svg style="left:169.00px;top:17.40px" width="9.60" height="7.90" viewBox="0 0 24 20"><path d="M2 0h7l3 3h10a2 2 0 0 1 2 2v13a2 2 0 0 1-2 2H2a2 2 0 0 1-2-2V2a2 2 0 0 1 2-2z" fill="#a0a3a7"/></svg>
<span style="font-size:8.2px;line-height:11.48px;color:#202124;letter-spacing:0.220px;transform:translate(38.20px,31.60px) rotate(0.05deg);">Файл</span>
<span style="font-size:8.2px;line-height:11.48px;color:#202124;letter-spacing:0.380px;transform:translate(67.80px,31.60px) rotate(0.05deg);">Изменить</span>
<span style="font-size:8.2px;line-height:11.48px;color:#202124;letter-spacing:0.094px;transform:translate(115.80px,31.60px) rotate(0.05deg);">Вид</span>
<span style="font-size:8.2px;line-height:11.48px;color:#202124;letter-spacing:0.327px;transform:translate(139.50px,31.60px) rotate(0.05deg);">Вставка</span>
<span style="font-size:8.2px;line-height:11.48px;color:#202124;letter-spacing:0.281px;transform:translate(180.80px,31.60px) rotate(0.05deg);">Формат</span>
<span style="font-size:8.2px;line-height:11.48px;color:#202124;letter-spacing:0.361px;transform:translate(220.50px,31.60px) rotate(0.05deg);">Данные</span>
<span style="font-size:8.2px;line-height:11.48px;color:#202124;letter-spacing:0.344px;transform:translate(260.70px,31.60px) rotate(0.05deg);">Инструменты</span>
<span style="font-size:8.2px;line-height:11.48px;color:#202124;letter-spacing:0.296px;transform:translate(323.90px,31.60px) rotate(0.05deg);">Справка</span>
<span style="font-size:7.6px;line-height:10.64px;color:#6b6f74;letter-spacing:0.446px;transform:translate(370.60px,32.39px) rotate(0.05deg);text-decoration:underline;text-decoration-skip-ink:none;text-decoration-thickness:0.6px;text-underline-offset:0.6px;">Последнее изменение: 2 минуты назад</span>
<svg style="left:675.00px;top:21.30px" width="12.60" height="11.60" viewBox="0 0 126 116"><path d="M8 0h110a8 8 0 0 1 8 8v108l-24-24H8a8 8 0 0 1-8-8V8a8 8 0 0 1 8-8z" fill="#54575c"/><rect x="24" y="20" width="78" height="11" fill="#fff"/><rect x="24" y="40" width="78" height="11" fill="#fff"/><rect x="24" y="60" width="78" height="11" fill="#fff"/></svg>
<svg style="left:705.00px;top:23.20px" width="8.60" height="8.20" viewBox="0 0 86 82"><circle cx="43" cy="20" r="19" fill="#fff"/><path d="M0 66c0-16 28-24 43-24s43 8 43 24v6H0z" fill="#fff"/><rect x="0" y="74" width="86" height="8" fill="#fff"/></svg>
<span style="font-size:8.2px;line-height:11.48px;color:#fff;font-weight:700;letter-spacing:0.142px;transform:translate(719.00px,22.13px) rotate(0.05deg);">Настройки Доступа</span>
<svg style="left:11.66px;top:53.07px" width="10.70" height="10.70" viewBox="0 0 24 24"><path d="M12.5 8c-2.65 0-5.05.99-6.9 2.6L2 7v9h9l-3.62-3.62c1.39-1.16 3.16-1.88 5.12-1.88 3.54 0 6.55 2.31 7.6 5.5l2.37-.78C21.08 11.03 17.15 8 12.5 8z" fill="#44474b"/></svg>
<svg style="left:28.74px;top:53.07px" width="10.70" height="10.70" viewBox="0 0 24 24"><path d="M18.4 10.6C16.55 8.99 14.15 8 11.5 8c-4.65 0-8.58 3.03-9.96 7.22L3.9 16c1.05-3.19 4.05-5.5 7.6-5.5 1.95 0 3.73.72 5.12 1.88L13 16h9V7l-3.6 3.6z" fill="#44474b"/></svg>
<svg style="left:45.25px;top:52.75px" width="10.70" height="10.70" viewBox="0 0 24 24"><path d="M19 8H5c-1.66 0-3 1.34-3 3v6h4v4h12v-4h4v-6c0-1.66-1.34-3-3-3zm-3 11H8v-5h8v5zm3-7c-.55 0-1-.45-1-1s.45-1 1-1 1 .45 1 1-.45 1-1 1zm-1-9H6v4h12V3z" fill="#44474b"/></svg>
<svg style="left:62.23px;top:52.85px" width="10.70" height="10.70" viewBox="0 0 24 24"><path d="M18 4V3c0-.55-.45-1-1-1H5c-.55 0-1 .45-1 1v4c0 .55.45 1 1 1h12c.55 0 1-.45 1-1V6h1v4H9v11c0 .55.45 1 1 1h2c.55 0 1-.45 1-1v-9h8V4h-3z" fill="#44474b"/></svg>
<span style="font-size:7.2px;line-height:10.08px;color:#2b2e31;letter-spacing:-0.464px;transform:translate(87.80px,53.68px) rotate(0.05deg);">100%</span>
<svg style="left:113.00px;top:57.45px" width="4.00" height="2.10" viewBox="0 0 10 5"><path d="M0 0h10L5 5z" fill="#3c4043"/></svg>
<span style="font-size:7.6px;line-height:10.64px;color:#2b2e31;letter-spacing:-0.344px;transform:translate(130.40px,52.89px) rotate(0.05deg);">р.</span>
<span style="font-size:7.0px;line-height:9.8px;color:#2b2e31;font-weight:700;transform:translate(147.50px,54.43px) rotate(0.05deg);">%</span>
<span style="font-size:7.4px;line-height:10.36px;color:#2b2e31;letter-spacing:0.028px;transform:translate(161.70px,54.25px) rotate(0.05deg);">.0</span>
<svg style="left:166.30px;top:61.50px" width="4.40" height="2.40" viewBox="0 0 44 24"><path d="M0 12L14 0v7h30v10H14v7z" fill="#2a2d30"/></svg>
<span style="font-size:7.4px;line-height:10.36px;color:#2b2e31;letter-spacing:-0.241px;transform:translate(178.20px,54.25px) rotate(0.05deg);">.00</span>
<svg style="left:184.20px;top:61.50px" width="4.40" height="2.40" viewBox="0 0 44 24"><path d="M44 12L30 0v7H0v10h30v7z" fill="#2a2d30"/></svg>
<span style="font-size:7.4px;line-height:10.36px;color:#2b2e31;letter-spacing:-0.472px;transform:translate(194.50px,54.05px) rotate(0.05deg);">123</span>
<svg style="left:207.00px;top:57.45px" width="4.00" height="2.10" viewBox="0 0 10 5"><path d="M0 0h10L5 5z" fill="#3c4043"/></svg>
<span style="font-size:7.3px;line-height:10.22px;color:#2b2e31;letter-spacing:-0.102px;transform:translate(227.40px,53.73px) rotate(0.05deg);">Arial</span>
<svg style="left:274.70px;top:57.45px" width="4.00" height="2.10" viewBox="0 0 10 5"><path d="M0 0h10L5 5z" fill="#3c4043"/></svg>
<span style="font-size:7.3px;line-height:10.22px;color:#2b2e31;letter-spacing:-0.025px;transform:translate(294.60px,53.73px) rotate(0.05deg);">10</span>
<svg style="left:319.40px;top:57.45px" width="4.00" height="2.10" viewBox="0 0 10 5"><path d="M0 0h10L5 5z" fill="#3c4043"/></svg>
<span style="font-size:9.4px;line-height:13.16px;color:#2b2e31;font-weight:700;transform:translate(336.41px,51.57px) rotate(0.05deg);">B</span>
<svg style="left:351.40px;top:53.31px" width="11.00" height="11.00" viewBox="0 0 24 24"><path d="M10 4v3h2.21l-3.42 8H6v3h8v-3h-2.21l3.42-8H18V4z" fill="#44474b"/></svg>
<span style="font-size:9.4px;line-height:13.16px;color:#2b2e31;transform:translate(370.17px,51.60px) rotate(0.05deg);">S</span>
<span style="font-size:9.4px;line-height:13.16px;color:#2b2e31;transform:translate(387.47px,50.40px) rotate(0.05deg);">A</span>
<svg style="left:407.90px;top:53.28px" width="12.20" height="12.20" viewBox="0 0 24 24"><path d="M16.56 8.94L7.62 0 6.21 1.41l2.38 2.38-5.15 5.15c-.59.59-.59 1.54 0 2.12l5.5 5.5c.29.29.68.44 1.06.44s.77-.15 1.06-.44l5.5-5.5c.59-.58.59-1.53 0-2.12zM5.21 10L10 5.21 14.79 10H5.21zM19 11.5s-2 2.17-2 3.5c0 1.1.9 2 2 2s2-.9 2-2c0-1.33-2-3.5-2-3.5z" fill="#44474b"/></svg>
<svg style="left:425.80px;top:52.50px" width="11.60" height="11.60" viewBox="0 0 24 24"><path d="M3 3v18h18V3H3zm8 16H5v-6h6v6zm0-8H5V5h6v6zm8 8h-6v-6h6v6zm0-8h-6V5h6v6z" fill="#44474b"/></svg>
<svg style="left:444.40px;top:54.20px" width="10.60" height="8.40" viewBox="0 0 106 84"><g fill="#44474b"><rect x="0" y="0" width="12" height="30"/><rect x="0" y="0" width="30" height="12"/><rect x="46" y="0" width="16" height="12"/><rect x="76" y="0" width="30" height="12"/><rect x="94" y="0" width="12" height="30"/><rect x="0" y="54" width="12" height="30"/><rect x="0" y="72" width="30" height="12"/><rect x="46" y="72" width="16" height="12"/><rect x="76" y="72" width="30" height="12"/><rect x="94" y="54" width="12" height="30"/><path d="M14 36h20V26l16 16-16 16V48H14zM92 36H72V26L56 42l16 16V48h20z"/></g></svg>
<svg style="left:461.00px;top:57.45px" width="4.00" height="2.10" viewBox="0 0 10 5"><path d="M0 0h10L5 5z" fill="#3c4043"/></svg>
<svg style="left:476.90px;top:54.30px" width="9.40" height="8.20" viewBox="0 0 94 82"><g fill="#44474b"><rect x="0" y="0" width="94" height="11"/><rect x="30" y="24" width="64" height="11"/><rect x="0" y="47" width="94" height="11"/><rect x="30" y="71" width="64" height="11"/></g></svg>
<svg style="left:489.60px;top:57.45px" width="4.00" height="2.10" viewBox="0 0 10 5"><path d="M0 0h10L5 5z" fill="#3c4043"/></svg>
<svg style="left:499.20px;top:52.70px" width="11.20" height="11.20" viewBox="0 0 24 24"><path d="M16 13h-3V3h-2v10H8l4 4 4-4zM4 19v2h16v-2H4z" fill="#44474b"/></svg>
<svg style="left:512.60px;top:57.45px" width="4.00" height="2.10" viewBox="0 0 10 5"><path d="M0 0h10L5 5z" fill="#3c4043"/></svg>
<svg style="left:522.80px;top:54.00px" width="9.00" height="8.80" viewBox="0 0 90 88"><g fill="#44474b"><rect x="0" y="0" width="11" height="88"/><rect x="26" y="38" width="64" height="11"/><path d="M58 10l14 16H44z"/><path d="M58 78L44 62h28z"/></g></svg>
<svg style="left:535.80px;top:57.45px" width="4.00" height="2.10" viewBox="0 0 10 5"><path d="M0 0h10L5 5z" fill="#3c4043"/></svg>
<svg style="left:546.60px;top:53.80px" width="9.40" height="9.00" viewBox="0 0 94 90"><g fill="none" stroke="#44474b" stroke-width="10"><path d="M6 14h40M26 14l22 40"/><path d="M10 84L86 18"/></g><path d="M94 8L70 12l16 20z" fill="#44474b"/></svg>
<svg style="left:559.00px;top:57.45px" width="4.00" height="2.10" viewBox="0 0 10 5"><path d="M0 0h10L5 5z" fill="#3c4043"/></svg>
<svg style="left:574.90px;top:56.00px" width="10.20" height="5.00" viewBox="0 0 102 50"><g fill="none" stroke="#44474b" stroke-width="11"><path d="M44 6H25a19 19 0 0 0 0 38h19"/><path d="M58 6h19a19 19 0 0 1 0 38H58"/><path d="M32 25h38"/></g></svg>
<svg style="left:591.30px;top:52.70px" width="11.20" height="11.20" viewBox="0 0 24 24"><path d="M22 4c0-1.1-.9-2-2-2H4c-1.1 0-2 .9-2 2v12c0 1.1.9 2 2 2h14l4 4V4zm-5 7h-4v4h-2v-4H7V9h4V5h2v4h4v2z" fill="#2f3236"/></svg>
<svg style="left:607.00px;top:52.00px" width="12.60" height="12.60" viewBox="0 0 24 24"><path d="M9 17H7v-7h2v7zm4 0h-2V7h2v10zm4 0h-2v-4h2v4zm2 2H5V5h14v14zm0-16H5c-1.1 0-2 .9-2 2v14c0 1.1.9 2 2 2h14c1.1 0 2-.9 2-2V5c0-1.1-.9-2-2-2z" fill="#44474b"/></svg>
<svg style="left:627.00px;top:55.20px" width="8.00" height="6.20" viewBox="0 0 80 62"><path d="M2 0h76L48 30v32H32V30z" fill="#44474b"/></svg>
<svg style="left:642.10px;top:57.45px" width="4.00" height="2.10" viewBox="0 0 10 5"><path d="M0 0h10L5 5z" fill="#3c4043"/></svg>
<svg style="left:650.70px;top:52.10px" width="12.40" height="12.40" viewBox="0 0 24 24"><path d="M18 4H6v2l6.5 6L6 18v2h12v-3h-7l5-5-5-5h7V4z" fill="#44474b"/></svg>
<svg style="left:665.40px;top:57.45px" width="4.00" height="2.10" viewBox="0 0 10 5"><path d="M0 0h10L5 5z" fill="#3c4043"/></svg>
<span style="font-size:9.6px;line-height:13.44px;color:#202124;font-weight:700;letter-spacing:-1.050px;transform:translate(682.20px,52.63px) rotate(0.05deg);">Ру</span>
<svg style="left:697.80px;top:57.45px" width="4.00" height="2.10" viewBox="0 0 10 5"><path d="M0 0h10L5 5z" fill="#3c4043"/></svg>
<svg style="left:802.00px;top:51.19px" width="15.20" height="15.20" viewBox="0 0 24 24"><path d="M12 8l-6 6 1.41 1.41L12 10.83l4.59 4.59L18 14z" fill="#44474b"/></svg>
<svg style="left:7.80px;top:72.20px" width="6.20" height="8.40" viewBox="0 0 62 84"><g fill="none" stroke="#c9ccd0" stroke-width="7"><path d="M0 28h24M30 6c-14-4-18 4-18 22v40"/><path d="M26 40l32 42M58 40L26 82"/></g></svg>
<span style="font-size:7.8px;line-height:10.92px;color:#111;font-weight:700;transform:translate(29.30px,72.21px) rotate(0.05deg);">1</span>
<span style="font-size:6.4px;line-height:8.96px;color:#75797e;transform:translate(52.01px,89.27px) rotate(0.05deg);">I</span>
<span style="font-size:6.4px;line-height:8.96px;color:#75797e;transform:translate(111.50px,89.27px) rotate(0.05deg);">J</span>
<span style="font-size:6.4px;line-height:8.96px;color:#75797e;transform:translate(171.17px,89.27px) rotate(0.05deg);">K</span>
<span style="font-size:6.4px;line-height:8.96px;color:#75797e;transform:translate(231.72px,89.27px) rotate(0.05deg);">L</span>
<span style="font-size:6.4px;line-height:8.96px;color:#75797e;transform:translate(291.04px,89.27px) rotate(0.05deg);">M</span>
<span style="font-size:6.4px;line-height:8.96px;color:#75797e;transform:translate(351.59px,89.27px) rotate(0.05deg);">N</span>
<span style="font-size:6.4px;line-height:8.96px;color:#75797e;transform:translate(411.61px,89.27px) rotate(0.05deg);">O</span>
<span style="font-size:6.4px;line-height:8.96px;color:#75797e;transform:translate(472.17px,89.27px) rotate(0.05deg);">P</span>
<span style="font-size:6.4px;line-height:8.96px;color:#75797e;transform:translate(532.01px,89.27px) rotate(0.05deg);">Q</span>
<span style="font-size:6.4px;line-height:8.96px;color:#75797e;transform:translate(592.39px,89.27px) rotate(0.05deg);">R</span>
<span style="font-size:6.4px;line-height:8.96px;color:#75797e;transform:translate(652.77px,89.27px) rotate(0.05deg);">S</span>
<span style="font-size:6.4px;line-height:8.96px;color:#75797e;transform:translate(713.15px,89.27px) rotate(0.05deg);">T</span>
<span style="font-size:6.4px;line-height:8.96px;color:#75797e;transform:translate(772.99px,89.27px) rotate(0.05deg);">U</span>
<span style="font-size:6.4px;line-height:8.96px;color:#666a6f;transform:translate(7.22px,102.87px) rotate(0.05deg);">1</span>
<span style="font-size:6.4px;line-height:8.96px;color:#666a6f;transform:translate(7.22px,115.37px) rotate(0.05deg);">2</span>
<span style="font-size:6.4px;line-height:8.96px;color:#666a6f;transform:translate(7.22px,127.87px) rotate(0.05deg);">3</span>
<span style="font-size:6.4px;line-height:8.96px;color:#666a6f;transform:translate(7.22px,140.37px) rotate(0.05deg);">4</span>
<span style="font-size:6.4px;line-height:8.96px;color:#666a6f;transform:translate(7.22px,152.87px) rotate(0.05deg);">5</span>
<span style="font-size:6.4px;line-height:8.96px;color:#666a6f;transform:translate(7.22px,165.37px) rotate(0.05deg);">6</span>
<span style="font-size:6.4px;line-height:8.96px;color:#666a6f;transform:translate(7.22px,177.87px) rotate(0.05deg);">7</span>
<span style="font-size:6.4px;line-height:8.96px;color:#666a6f;transform:translate(7.22px,190.37px) rotate(0.05deg);">8</span>
<span style="font-size:6.4px;line-height:8.96px;color:#666a6f;transform:translate(7.22px,202.87px) rotate(0.05deg);">9</span>
<span style="font-size:6.4px;line-height:8.96px;color:#666a6f;transform:translate(5.45px,215.37px) rotate(0.05deg);">10</span>
<span style="font-size:6.4px;line-height:8.96px;color:#666a6f;transform:translate(5.68px,227.87px) rotate(0.05deg);">11</span>
<span style="font-size:6.4px;line-height:8.96px;color:#666a6f;transform:translate(5.45px,240.37px) rotate(0.05deg);">12</span>
<span style="font-size:6.4px;line-height:8.96px;color:#666a6f;transform:translate(5.45px,252.87px) rotate(0.05deg);">13</span>
<span style="font-size:6.4px;line-height:8.96px;color:#666a6f;transform:translate(5.45px,265.37px) rotate(0.05deg);">14</span>
<span style="font-size:6.4px;line-height:8.96px;color:#666a6f;transform:translate(5.45px,277.87px) rotate(0.05deg);">15</span>
<span style="font-size:6.4px;line-height:8.96px;color:#666a6f;transform:translate(5.45px,290.37px) rotate(0.05deg);">16</span>
<span style="font-size:6.4px;line-height:8.96px;color:#666a6f;transform:translate(5.45px,302.87px) rotate(0.05deg);">17</span>
<span style="font-size:6.4px;line-height:8.96px;color:#666a6f;transform:translate(5.45px,315.37px) rotate(0.05deg);">18</span>
<span style="font-size:6.4px;line-height:8.96px;color:#666a6f;transform:translate(5.45px,327.87px) rotate(0.05deg);">19</span>
<span style="font-size:6.4px;line-height:8.96px;color:#666a6f;transform:translate(5.45px,340.37px) rotate(0.05deg);">20</span>
<span style="font-size:6.4px;line-height:8.96px;color:#666a6f;transform:translate(5.45px,352.87px) rotate(0.05deg);">21</span>
<span style="font-size:6.4px;line-height:8.96px;color:#666a6f;transform:translate(5.45px,365.37px) rotate(0.05deg);">22</span>
<span style="font-size:6.4px;line-height:8.96px;color:#666a6f;transform:translate(5.45px,377.87px) rotate(0.05deg);">23</span>
<span style="font-size:6.4px;line-height:8.96px;color:#666a6f;transform:translate(5.45px,390.37px) rotate(0.05deg);">24</span>
<span style="font-size:6.4px;line-height:8.96px;color:#666a6f;transform:translate(5.45px,402.87px) rotate(0.05deg);">25</span>
<span style="font-size:6.4px;line-height:8.96px;color:#666a6f;transform:translate(5.45px,415.37px) rotate(0.05deg);">26</span>
<span style="font-size:6.4px;line-height:8.96px;color:#666a6f;transform:translate(5.45px,427.87px) rotate(0.05deg);">27</span>
<span style="font-size:6.4px;line-height:8.96px;color:#666a6f;transform:translate(5.45px,440.37px) rotate(0.05deg);">28</span>
<span style="font-size:7.73px;line-height:10.82px;color:#111;transform:translate(25.20px,101.17px) rotate(0.05deg);">Email</span>
<span style="font-size:7.73px;line-height:10.82px;color:#111;width:57.20px;overflow:hidden;transform:translate(85.40px,101.17px) rotate(0.05deg);">Не отправлять SMS</span>
<span style="font-size:7.73px;line-height:10.82px;color:#111;width:57.20px;overflow:hidden;transform:translate(145.60px,101.17px) rotate(0.05deg);">Дисконтная карта</span>
<span style="font-size:7.73px;line-height:10.82px;color:#111;transform:translate(205.80px,101.17px) rotate(0.05deg);">Скидка</span>
<span style="font-size:7.73px;line-height:10.82px;color:#111;transform:translate(266.00px,101.17px) rotate(0.05deg);">Лицевой счет</span>
<span style="font-size:7.73px;line-height:10.82px;color:#111;transform:translate(326.20px,101.17px) rotate(0.05deg);">День рождения</span>
<span style="font-size:7.73px;line-height:10.82px;color:#111;transform:translate(386.40px,101.17px) rotate(0.05deg);">Канал продаж</span>
<span style="font-size:7.73px;line-height:10.82px;color:#111;transform:translate(446.60px,101.17px) rotate(0.05deg);">Филиал</span>
<span style="font-size:7.73px;line-height:10.82px;color:#111;transform:translate(506.80px,101.17px) rotate(0.05deg);">Создан</span>
<span style="font-size:7.73px;line-height:10.82px;color:#111;width:57.20px;overflow:hidden;transform:translate(567.00px,101.17px) rotate(0.05deg);">Заказы (период)</span>
<span style="font-size:7.73px;line-height:10.82px;color:#111;transform:translate(627.20px,101.17px) rotate(0.05deg);">Сумма (период)</span>
<span style="font-size:7.73px;line-height:10.82px;color:#111;transform:translate(687.40px,101.17px) rotate(0.05deg);">Последний заказ</span>
<span style="font-size:7.73px;line-height:10.82px;color:#111;transform:translate(256.90px,113.67px) rotate(0.05deg);">0</span>
<span style="font-size:7.73px;line-height:10.82px;color:#111;transform:translate(317.10px,113.67px) rotate(0.05deg);">0</span>
<span style="font-size:7.73px;line-height:10.82px;color:#111;transform:translate(523.56px,113.67px) rotate(0.05deg);">01.09.2019</span>
<span style="font-size:7.73px;line-height:10.82px;color:#1d2430;transform:translate(618.10px,113.67px) rotate(0.05deg);">1</span>
<span style="font-size:7.73px;line-height:10.82px;color:#111;transform:translate(665.43px,113.67px) rotate(0.05deg);">2203</span>
<span style="font-size:7.73px;line-height:10.82px;color:#111;transform:translate(704.16px,113.67px) rotate(0.05deg);">01.09.2019</span>
<span style="font-size:7.73px;line-height:10.82px;color:#111;transform:translate(256.90px,126.17px) rotate(0.05deg);">0</span>
<span style="font-size:7.73px;line-height:10.82px;color:#111;transform:translate(317.10px,126.17px) rotate(0.05deg);">0</span>
<span style="font-size:7.73px;line-height:10.82px;color:#111;transform:translate(523.56px,126.17px) rotate(0.05deg);">01.09.2019</span>
<span style="font-size:7.73px;line-height:10.82px;color:#1d2430;transform:translate(618.10px,126.17px) rotate(0.05deg);">2</span>
<span style="font-size:7.73px;line-height:10.82px;color:#111;transform:translate(669.71px,126.17px) rotate(0.05deg);">954</span>
<span style="font-size:7.73px;line-height:10.82px;color:#111;transform:translate(704.16px,126.17px) rotate(0.05deg);">01.09.2019</span>
<span style="font-size:7.73px;line-height:10.82px;color:#111;transform:translate(256.90px,138.67px) rotate(0.05deg);">0</span>
<span style="font-size:7.73px;line-height:10.82px;color:#111;transform:translate(317.10px,138.67px) rotate(0.05deg);">0</span>
<span style="font-size:7.73px;line-height:10.82px;color:#111;transform:translate(523.56px,138.67px) rotate(0.05deg);">01.09.2019</span>
<span style="font-size:7.73px;line-height:10.82px;color:#1d2430;transform:translate(618.10px,138.67px) rotate(0.05deg);">1</span>
<span style="font-size:7.73px;line-height:10.82px;color:#111;transform:translate(665.43px,138.67px) rotate(0.05deg);">1749</span>
<span style="font-size:7.73px;line-height:10.82px;color:#111;transform:translate(704.16px,138.67px) rotate(0.05deg);">01.09.2019</span>
<span style="font-size:7.73px;line-height:10.82px;color:#111;transform:translate(256.90px,151.17px) rotate(0.05deg);">0</span>
<span style="font-size:7.73px;line-height:10.82px;color:#111;transform:translate(317.10px,151.17px) rotate(0.05deg);">0</span>
<span style="font-size:7.73px;line-height:10.82px;color:#111;transform:translate(523.56px,151.17px) rotate(0.05deg);">01.09.2019</span>
<span style="font-size:7.73px;line-height:10.82px;color:#1d2430;transform:translate(618.10px,151.17px) rotate(0.05deg);">2</span>
<span style="font-size:7.73px;line-height:10.82px;color:#111;transform:translate(665.43px,151.17px) rotate(0.05deg);">5047</span>
<span style="font-size:7.73px;line-height:10.82px;color:#111;transform:translate(704.16px,151.17px) rotate(0.05deg);">07.09.2019</span>
<span style="font-size:7.73px;line-height:10.82px;color:#111;transform:translate(256.90px,163.67px) rotate(0.05deg);">0</span>
<span style="font-size:7.73px;line-height:10.82px;color:#111;transform:translate(317.10px,163.67px) rotate(0.05deg);">0</span>
<span style="font-size:7.73px;line-height:10.82px;color:#111;transform:translate(523.56px,163.67px) rotate(0.05deg);">01.09.2019</span>
<span style="font-size:7.73px;line-height:10.82px;color:#1d2430;transform:translate(618.10px,163.67px) rotate(0.05deg);">1</span>
<span style="font-size:7.73px;line-height:10.82px;color:#111;transform:translate(665.43px,163.67px) rotate(0.05deg);">1359</span>
<span style="font-size:7.73px;line-height:10.82px;color:#111;transform:translate(704.16px,163.67px) rotate(0.05deg);">01.09.2019</span>
<span style="font-size:7.73px;line-height:10.82px;color:#111;transform:translate(256.90px,176.17px) rotate(0.05deg);">0</span>
<span style="font-size:7.73px;line-height:10.82px;color:#111;transform:translate(317.10px,176.17px) rotate(0.05deg);">0</span>
<span style="font-size:7.73px;line-height:10.82px;color:#111;transform:translate(523.56px,176.17px) rotate(0.05deg);">01.09.2019</span>
<span style="font-size:7.73px;line-height:10.82px;color:#1d2430;transform:translate(618.10px,176.17px) rotate(0.05deg);">2</span>
<span style="font-size:7.73px;line-height:10.82px;color:#111;transform:translate(666.57px,176.17px) rotate(0.05deg);">1115</span>
<span style="font-size:7.73px;line-height:10.82px;color:#111;transform:translate(704.16px,176.17px) rotate(0.05deg);">01.09.2019</span>
<span style="font-size:7.73px;line-height:10.82px;color:#111;transform:translate(256.90px,188.67px) rotate(0.05deg);">0</span>
<span style="font-size:7.73px;line-height:10.82px;color:#111;transform:translate(317.10px,188.67px) rotate(0.05deg);">0</span>
<span style="font-size:7.73px;line-height:10.82px;color:#111;transform:translate(523.56px,188.67px) rotate(0.05deg);">01.09.2019</span>
<span style="font-size:7.73px;line-height:10.82px;color:#1d2430;transform:translate(618.10px,188.67px) rotate(0.05deg);">1</span>
<span style="font-size:7.73px;line-height:10.82px;color:#111;transform:translate(665.43px,188.67px) rotate(0.05deg);">1302</span>
<span style="font-size:7.73px;line-height:10.82px;color:#111;transform:translate(704.16px,188.67px) rotate(0.05deg);">01.09.2019</span>
<span style="font-size:7.73px;line-height:10.82px;color:#111;transform:translate(256.90px,201.17px) rotate(0.05deg);">0</span>
<span style="font-size:7.73px;line-height:10.82px;color:#111;transform:translate(317.10px,201.17px) rotate(0.05deg);">0</span>
<span style="font-size:7.73px;line-height:10.82px;color:#111;transform:translate(523.56px,201.17px) rotate(0.05deg);">01.09.2019</span>
<span style="font-size:7.73px;line-height:10.82px;color:#1d2430;transform:translate(618.10px,201.17px) rotate(0.05deg);">1</span>
<span style="font-size:7.73px;line-height:10.82px;color:#111;transform:translate(665.43px,201.17px) rotate(0.05deg);">1310</span>
<span style="font-size:7.73px;line-height:10.82px;color:#111;transform:translate(704.16px,201.17px) rotate(0.05deg);">01.09.2019</span>
<span style="font-size:7.73px;line-height:10.82px;color:#111;transform:translate(256.90px,213.67px) rotate(0.05deg);">0</span>
<span style="font-size:7.73px;line-height:10.82px;color:#111;transform:translate(317.10px,213.67px) rotate(0.05deg);">0</span>
<span style="font-size:7.73px;line-height:10.82px;color:#111;transform:translate(523.56px,213.67px) rotate(0.05deg);">01.09.2019</span>
<span style="font-size:7.73px;line-height:10.82px;color:#1d2430;transform:translate(618.10px,213.67px) rotate(0.05deg);">1</span>
<span style="font-size:7.73px;line-height:10.82px;color:#111;transform:translate(669.71px,213.67px) rotate(0.05deg);">530</span>
<span style="font-size:7.73px;line-height:10.82px;color:#111;transform:translate(704.16px,213.67px) rotate(0.05deg);">01.09.2019</span>
<span style="font-size:7.73px;line-height:10.82px;color:#111;transform:translate(256.90px,226.17px) rotate(0.05deg);">0</span>
<span style="font-size:7.73px;line-height:10.82px;color:#111;transform:translate(317.10px,226.17px) rotate(0.05deg);">0</span>
<span style="font-size:7.73px;line-height:10.82px;color:#111;transform:translate(523.56px,226.17px) rotate(0.05deg);">01.09.2019</span>
<span style="font-size:7.73px;line-height:10.82px;color:#1d2430;transform:translate(618.10px,226.17px) rotate(0.05deg);">1</span>
<span style="font-size:7.73px;line-height:10.82px;color:#111;transform:translate(678.30px,226.17px) rotate(0.05deg);">0</span>
<span style="font-size:7.73px;line-height:10.82px;color:#111;transform:translate(704.16px,226.17px) rotate(0.05deg);">01.09.2019</span>
<span style="font-size:7.73px;line-height:10.82px;color:#111;transform:translate(256.90px,238.67px) rotate(0.05deg);">0</span>
<span style="font-size:7.73px;line-height:10.82px;color:#111;transform:translate(317.10px,238.67px) rotate(0.05deg);">0</span>
<span style="font-size:7.73px;line-height:10.82px;color:#111;transform:translate(523.56px,238.67px) rotate(0.05deg);">01.09.2019</span>
<span style="font-size:7.73px;line-height:10.82px;color:#1d2430;transform:translate(618.10px,238.67px) rotate(0.05deg);">1</span>
<span style="font-size:7.73px;line-height:10.82px;color:#111;transform:translate(669.71px,238.67px) rotate(0.05deg);">618</span>
<span style="font-size:7.73px;line-height:10.82px;color:#111;transform:translate(704.16px,238.67px) rotate(0.05deg);">01.09.2019</span>
<span style="font-size:7.73px;line-height:10.82px;color:#111;transform:translate(256.90px,251.17px) rotate(0.05deg);">0</span>
<span style="font-size:7.73px;line-height:10.82px;color:#111;transform:translate(317.10px,251.17px) rotate(0.05deg);">0</span>
<span style="font-size:7.73px;line-height:10.82px;color:#111;transform:translate(523.56px,251.17px) rotate(0.05deg);">01.09.2019</span>
<span style="font-size:7.73px;line-height:10.82px;color:#1d2430;transform:translate(618.10px,251.17px) rotate(0.05deg);">1</span>
<span style="font-size:7.73px;line-height:10.82px;color:#111;transform:translate(665.43px,251.17px) rotate(0.05deg);">1849</span>
<span style="font-size:7.73px;line-height:10.82px;color:#111;transform:translate(704.16px,251.17px) rotate(0.05deg);">02.09.2019</span>
<span style="font-size:7.73px;line-height:10.82px;color:#111;transform:translate(256.90px,263.67px) rotate(0.05deg);">0</span>
<span style="font-size:7.73px;line-height:10.82px;color:#111;transform:translate(317.10px,263.67px) rotate(0.05deg);">0</span>
<span style="font-size:7.73px;line-height:10.82px;color:#111;transform:translate(523.56px,263.67px) rotate(0.05deg);">01.09.2019</span>
<span style="font-size:7.73px;line-height:10.82px;color:#1d2430;transform:translate(618.10px,263.67px) rotate(0.05deg);">1</span>
<span style="font-size:7.73px;line-height:10.82px;color:#111;transform:translate(665.99px,263.67px) rotate(0.05deg);">1199</span>
<span style="font-size:7.73px;line-height:10.82px;color:#111;transform:translate(704.16px,263.67px) rotate(0.05deg);">01.09.2019</span>
<span style="font-size:7.73px;line-height:10.82px;color:#111;transform:translate(256.90px,276.17px) rotate(0.05deg);">0</span>
<span style="font-size:7.73px;line-height:10.82px;color:#111;transform:translate(317.10px,276.17px) rotate(0.05deg);">0</span>
<span style="font-size:7.73px;line-height:10.82px;color:#111;transform:translate(523.56px,276.17px) rotate(0.05deg);">01.09.2019</span>
<span style="font-size:7.73px;line-height:10.82px;color:#1d2430;transform:translate(618.10px,276.17px) rotate(0.05deg);">1</span>
<span style="font-size:7.73px;line-height:10.82px;color:#111;transform:translate(665.43px,276.17px) rotate(0.05deg);">1302</span>
<span style="font-size:7.73px;line-height:10.82px;color:#111;transform:translate(704.16px,276.17px) rotate(0.05deg);">01.09.2019</span>
<span style="font-size:7.73px;line-height:10.82px;color:#111;transform:translate(256.90px,288.67px) rotate(0.05deg);">0</span>
<span style="font-size:7.73px;line-height:10.82px;color:#111;transform:translate(317.10px,288.67px) rotate(0.05deg);">0</span>
<span style="font-size:7.73px;line-height:10.82px;color:#111;transform:translate(523.56px,288.67px) rotate(0.05deg);">01.09.2019</span>
<span style="font-size:7.73px;line-height:10.82px;color:#1d2430;transform:translate(618.10px,288.67px) rotate(0.05deg);">1</span>
<span style="font-size:7.73px;line-height:10.82px;color:#111;transform:translate(678.30px,288.67px) rotate(0.05deg);">0</span>
<span style="font-size:7.73px;line-height:10.82px;color:#111;transform:translate(704.16px,288.67px) rotate(0.05deg);">01.09.2019</span>
<span style="font-size:7.73px;line-height:10.82px;color:#111;transform:translate(256.90px,301.17px) rotate(0.05deg);">0</span>
<span style="font-size:7.73px;line-height:10.82px;color:#111;transform:translate(317.10px,301.17px) rotate(0.05deg);">0</span>
<span style="font-size:7.73px;line-height:10.82px;color:#111;transform:translate(523.56px,301.17px) rotate(0.05deg);">01.09.2019</span>
<span style="font-size:7.73px;line-height:10.82px;color:#1d2430;transform:translate(618.10px,301.17px) rotate(0.05deg);">2</span>
<span style="font-size:7.73px;line-height:10.82px;color:#111;transform:translate(669.71px,301.17px) rotate(0.05deg);">648</span>
<span style="font-size:7.73px;line-height:10.82px;color:#111;transform:translate(704.16px,301.17px) rotate(0.05deg);">01.09.2019</span>
<span style="font-size:7.73px;line-height:10.82px;color:#111;transform:translate(256.90px,313.67px) rotate(0.05deg);">0</span>
<span style="font-size:7.73px;line-height:10.82px;color:#111;transform:translate(317.10px,313.67px) rotate(0.05deg);">0</span>
<span style="font-size:7.73px;line-height:10.82px;color:#111;transform:translate(523.56px,313.67px) rotate(0.05deg);">02.09.2019</span>
<span style="font-size:7.73px;line-height:10.82px;color:#1d2430;transform:translate(618.10px,313.67px) rotate(0.05deg);">1</span>
<span style="font-size:7.73px;line-height:10.82px;color:#111;transform:translate(665.43px,313.67px) rotate(0.05deg);">1312</span>
<span style="font-size:7.73px;line-height:10.82px;color:#111;transform:translate(704.16px,313.67px) rotate(0.05deg);">13.09.2019</span>
<span style="font-size:7.73px;line-height:10.82px;color:#111;transform:translate(256.90px,326.17px) rotate(0.05deg);">0</span>
<span style="font-size:7.73px;line-height:10.82px;color:#111;transform:translate(317.10px,326.17px) rotate(0.05deg);">0</span>
<span style="font-size:7.73px;line-height:10.82px;color:#111;transform:translate(523.56px,326.17px) rotate(0.05deg);">02.09.2019</span>
<span style="font-size:7.73px;line-height:10.82px;color:#1d2430;transform:translate(618.10px,326.17px) rotate(0.05deg);">5</span>
<span style="font-size:7.73px;line-height:10.82px;color:#111;transform:translate(665.43px,326.17px) rotate(0.05deg);">3660</span>
<span style="font-size:7.73px;line-height:10.82px;color:#111;transform:translate(704.16px,326.17px) rotate(0.05deg);">22.09.2019</span>
<span style="font-size:7.73px;line-height:10.82px;color:#111;transform:translate(256.90px,338.67px) rotate(0.05deg);">0</span>
<span style="font-size:7.73px;line-height:10.82px;color:#111;transform:translate(317.10px,338.67px) rotate(0.05deg);">0</span>
<span style="font-size:7.73px;line-height:10.82px;color:#111;transform:translate(523.56px,338.67px) rotate(0.05deg);">02.09.2019</span>
<span style="font-size:7.73px;line-height:10.82px;color:#1d2430;transform:translate(618.10px,338.67px) rotate(0.05deg);">1</span>
<span style="font-size:7.73px;line-height:10.82px;color:#111;transform:translate(665.43px,338.67px) rotate(0.05deg);">1691</span>
<span style="font-size:7.73px;line-height:10.82px;color:#111;transform:translate(704.16px,338.67px) rotate(0.05deg);">02.09.2019</span>
<span style="font-size:7.73px;line-height:10.82px;color:#111;transform:translate(256.90px,351.17px) rotate(0.05deg);">0</span>
<span style="font-size:7.73px;line-height:10.82px;color:#111;transform:translate(317.10px,351.17px) rotate(0.05deg);">0</span>
<span style="font-size:7.73px;line-height:10.82px;color:#111;transform:translate(523.56px,351.17px) rotate(0.05deg);">02.09.2019</span>
<span style="font-size:7.73px;line-height:10.82px;color:#1d2430;transform:translate(618.10px,351.17px) rotate(0.05deg);">2</span>
<span style="font-size:7.73px;line-height:10.82px;color:#111;transform:translate(665.43px,351.17px) rotate(0.05deg);">2917</span>
<span style="font-size:7.73px;line-height:10.82px;color:#111;transform:translate(704.16px,351.17px) rotate(0.05deg);">23.09.2019</span>
<span style="font-size:7.73px;line-height:10.82px;color:#111;transform:translate(256.90px,363.67px) rotate(0.05deg);">0</span>
<span style="font-size:7.73px;line-height:10.82px;color:#111;transform:translate(317.10px,363.67px) rotate(0.05deg);">0</span>
<span style="font-size:7.73px;line-height:10.82px;color:#111;transform:translate(523.56px,363.67px) rotate(0.05deg);">02.09.2019</span>
<span style="font-size:7.73px;line-height:10.82px;color:#1d2430;transform:translate(618.10px,363.67px) rotate(0.05deg);">1</span>
<span style="font-size:7.73px;line-height:10.82px;color:#111;transform:translate(665.43px,363.67px) rotate(0.05deg);">1097</span>
<span style="font-size:7.73px;line-height:10.82px;color:#111;transform:translate(704.16px,363.67px) rotate(0.05deg);">02.09.2019</span>
<span style="font-size:7.73px;line-height:10.82px;color:#111;transform:translate(256.90px,376.17px) rotate(0.05deg);">0</span>
<span style="font-size:7.73px;line-height:10.82px;color:#111;transform:translate(317.10px,376.17px) rotate(0.05deg);">0</span>
<span style="font-size:7.73px;line-height:10.82px;color:#111;transform:translate(523.56px,376.17px) rotate(0.05deg);">02.09.2019</span>
<span style="font-size:7.73px;line-height:10.82px;color:#1d2430;transform:translate(618.10px,376.17px) rotate(0.05deg);">1</span>
<span style="font-size:7.73px;line-height:10.82px;color:#111;transform:translate(669.71px,376.17px) rotate(0.05deg);">697</span>
<span style="font-size:7.73px;line-height:10.82px;color:#111;transform:translate(704.16px,376.17px) rotate(0.05deg);">02.09.2019</span>
<span style="font-size:7.73px;line-height:10.82px;color:#111;transform:translate(256.90px,388.67px) rotate(0.05deg);">0</span>
<span style="font-size:7.73px;line-height:10.82px;color:#111;transform:translate(317.10px,388.67px) rotate(0.05deg);">0</span>
<span style="font-size:7.73px;line-height:10.82px;color:#111;transform:translate(523.56px,388.67px) rotate(0.05deg);">02.09.2019</span>
<span style="font-size:7.73px;line-height:10.82px;color:#1d2430;transform:translate(618.10px,388.67px) rotate(0.05deg);">1</span>
<span style="font-size:7.73px;line-height:10.82px;color:#111;transform:translate(678.30px,388.67px) rotate(0.05deg);">0</span>
<span style="font-size:7.73px;line-height:10.82px;color:#111;transform:translate(704.16px,388.67px) rotate(0.05deg);">02.09.2019</span>
<span style="font-size:7.73px;line-height:10.82px;color:#111;transform:translate(256.90px,401.17px) rotate(0.05deg);">0</span>
<span style="font-size:7.73px;line-height:10.82px;color:#111;transform:translate(317.10px,401.17px) rotate(0.05deg);">0</span>
<span style="font-size:7.73px;line-height:10.82px;color:#111;transform:translate(523.56px,401.17px) rotate(0.05deg);">03.09.2019</span>
<span style="font-size:7.73px;line-height:10.82px;color:#1d2430;transform:translate(618.10px,401.17px) rotate(0.05deg);">1</span>
<span style="font-size:7.73px;line-height:10.82px;color:#111;transform:translate(669.71px,401.17px) rotate(0.05deg);">398</span>
<span style="font-size:7.73px;line-height:10.82px;color:#111;transform:translate(704.16px,401.17px) rotate(0.05deg);">03.09.2019</span>
<span style="font-size:7.73px;line-height:10.82px;color:#111;transform:translate(256.90px,413.67px) rotate(0.05deg);">0</span>
<span style="font-size:7.73px;line-height:10.82px;color:#111;transform:translate(317.10px,413.67px) rotate(0.05deg);">0</span>
<span style="font-size:7.73px;line-height:10.82px;color:#111;transform:translate(523.56px,413.67px) rotate(0.05deg);">03.09.2019</span>
<span style="font-size:7.73px;line-height:10.82px;color:#1d2430;transform:translate(618.10px,413.67px) rotate(0.05deg);">1</span>
<span style="font-size:7.73px;line-height:10.82px;color:#111;transform:translate(669.71px,413.67px) rotate(0.05deg);">999</span>
<span style="font-size:7.73px;line-height:10.82px;color:#111;transform:translate(704.16px,413.67px) rotate(0.05deg);">03.09.2019</span>
<span style="font-size:7.73px;line-height:10.82px;color:#111;transform:translate(256.90px,426.17px) rotate(0.05deg);">0</span>
<span style="font-size:7.73px;line-height:10.82px;color:#111;transform:translate(317.10px,426.17px) rotate(0.05deg);">0</span>
<span style="font-size:7.73px;line-height:10.82px;color:#111;transform:translate(523.56px,426.17px) rotate(0.05deg);">03.09.2019</span>
<span style="font-size:7.73px;line-height:10.82px;color:#1d2430;transform:translate(618.10px,426.17px) rotate(0.05deg);">1</span>
<span style="font-size:7.73px;line-height:10.82px;color:#111;transform:translate(669.71px,426.17px) rotate(0.05deg);">699</span>
<span style="font-size:7.73px;line-height:10.82px;color:#111;transform:translate(704.16px,426.17px) rotate(0.05deg);">03.09.2019</span>
<span style="font-size:7.73px;line-height:10.82px;color:#111;transform:translate(256.90px,438.67px) rotate(0.05deg);">0</span>
<span style="font-size:7.73px;line-height:10.82px;color:#111;transform:translate(317.10px,438.67px) rotate(0.05deg);">0</span>
<span style="font-size:7.73px;line-height:10.82px;color:#111;transform:translate(523.56px,438.67px) rotate(0.05deg);">03.09.2019</span>
<span style="font-size:7.73px;line-height:10.82px;color:#1d2430;transform:translate(618.10px,438.67px) rotate(0.05deg);">1</span>
<span style="font-size:7.73px;line-height:10.82px;color:#111;transform:translate(669.71px,438.67px) rotate(0.05deg);">748</span>
<span style="font-size:7.73px;line-height:10.82px;color:#111;transform:translate(704.16px,438.67px) rotate(0.05deg);">03.09.2019</span>
<span style="font-size:8.3px;line-height:11.62px;color:#188038;font-weight:700;letter-spacing:0.108px;transform:translate(74.70px,461.06px) rotate(0.05deg);">Клиенты 1-455.xls</span>
<svg style="left:156.00px;top:465.15px" width="4.60" height="2.30" viewBox="0 0 10 5"><path d="M0 0h10L5 5z" fill="#188038"/></svg>
<span style="font-size:6.4px;line-height:8.96px;color:#3c4043;letter-spacing:0.078px;transform:translate(676.10px,463.57px) rotate(0.05deg);-webkit-text-stroke:0;">Сумма: 519</span>
<svg style="left:714.70px;top:465.20px" width="4.80" height="2.40" viewBox="0 0 10 5"><path d="M0 0h10L5 5z" fill="#50545a"/></svg>
<span style="font-size:7.0px;line-height:9.8px;color:#1e9a52;letter-spacing:0.131px;transform:translate(756.40px,463.91px) rotate(0.05deg);">Анализ данных</span>
</div>
<svg style="left:0;top:0" width="829" height="493" viewBox="0 0 829 493">
<rect x="565.30" y="99.10" width="59.80" height="11.80" fill="none" rx="1.2" stroke="#ff00cc" stroke-width="3"/>
<rect x="665.95" y="454.65" width="59.70" height="24.20" fill="none" rx="1.2" stroke="#ff00cc" stroke-width="3.1"/>
<rect x="0.00" y="0.00" width="7.20" height="493.00" fill="#fff"/>
<rect x="818.60" y="0.00" width="10.40" height="493.00" fill="#fff"/>
<rect x="0.00" y="0.00" width="829.00" height="7.00" fill="#fff"/>
<rect x="0" y="477.8" width="664" height="16" fill="#fff"/><rect x="727.6" y="477.8" width="102" height="16" fill="#fff"/><rect x="0" y="480.5" width="829" height="13" fill="#fff"/>
</svg>
</div></body></html>
